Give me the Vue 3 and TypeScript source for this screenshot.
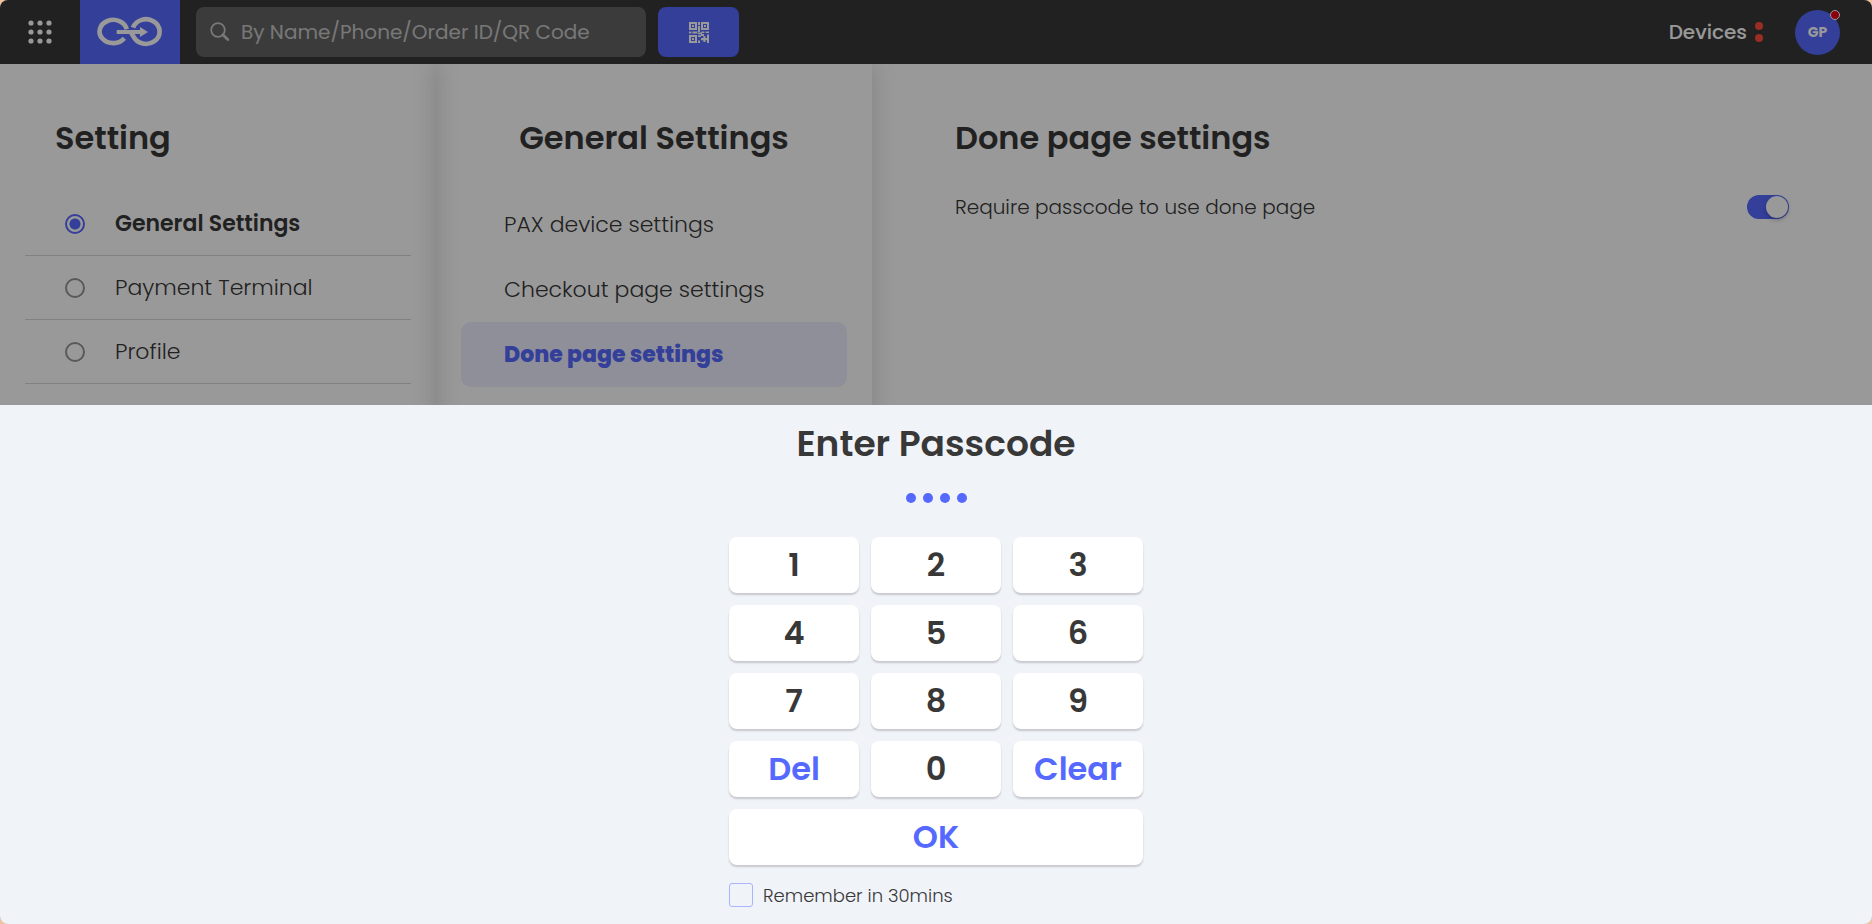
<script setup lang="ts">
import { ref } from 'vue'

const sections: string[] = ['General Settings', 'Payment Terminal', 'Profile']
const activeSection = ref<string>('General Settings')

const pages: string[] = ['PAX device settings', 'Checkout page settings', 'Done page settings']
const activePage = ref<string>('Done page settings')

const requirePasscode = ref<boolean>(true)
const remember = ref<boolean>(false)
const search = ref<string>('')

const maxLength = 4
const passcode = ref<string>('0000')
const keys: string[] = ['1', '2', '3', '4', '5', '6', '7', '8', '9', 'Del', '0', 'Clear', 'OK']

function isAction(key: string): boolean {
  return key.length > 1
}

function press(key: string): void {
  if (key === 'Del') passcode.value = passcode.value.slice(0, -1)
  else if (key === 'Clear') passcode.value = ''
  else if (!isAction(key) && passcode.value.length < maxLength) passcode.value += key
}
</script>

<template>
  <div class="shell">
    <header class="topbar">
      <button class="menu" type="button" aria-label="Menu">
        <svg width="24" height="24" viewBox="0 0 24 24" fill="#fff">
          <g v-for="y in [3, 12, 21]" :key="y">
            <circle v-for="x in [3, 12, 21]" :key="x" :cx="x" :cy="y" r="2.6" />
          </g>
        </svg>
      </button>
      <a class="logo" href="#" aria-label="Home">
        <svg width="100" height="64" viewBox="0 0 300 192" fill="none" stroke="#fff" stroke-width="14">
          <path d="M140 88 A41 35 0 1 0 133 115" />
          <path d="M159 83 A41 37 0 1 1 160 109 L152 96" />
          <path d="M110 96 H182" stroke-width="12" />
          <path d="M180 81 L204 96 L180 111 Z" fill="#fff" stroke="none" />
        </svg>
      </a>
      <label class="search">
        <svg width="20" height="20" viewBox="0 0 20 20" fill="none" stroke="#c8c8c8">
          <circle cx="8" cy="8" r="6.8" stroke-width="1.8" />
          <path d="M12.8 12.8 L17.8 17.6" stroke-width="2.8" stroke-linecap="round" />
        </svg>
        <input v-model="search" type="text" aria-label="Search" placeholder="By Name/Phone/Order ID/QR Code" />
      </label>
      <button class="qr" type="button" aria-label="Scan QR code">
        <svg width="20" height="21" viewBox="0 0 20 21" fill="#fff">
          <g fill="none" stroke="#fff" stroke-width="2">
            <rect x="1" y="1" width="6" height="6" />
            <rect x="13" y="1" width="6" height="6" />
            <rect x="1" y="14" width="6" height="6" />
          </g>
          <path d="M3 3h2v2H3zM15 3h2v2h-2zM3 16h2v2H3zM9 0h2v3H9zM9 4h2v6H9zM0 9.6h2.4v1.8H0zM3.4 9.6h5v1.8h-5zM9 10.4h4v1.8H9zM12.4 9.4h3v1.6h-3zM16.6 9.4H20V11h-3.4zM9 13.2h3V15H9zM12 12h3v2h-3zM14.4 14h2v6h-2zM12 16h8v2.2h-8zM18 12.4h2V21h-2zM9 18.6h2V21H9z" />
        </svg>
      </button>
      <div class="account">
        <button class="devices" type="button">
          Devices
          <span class="lights"><i></i><i></i></span>
        </button>
        <button class="avatar" type="button">GP<span class="badge"></span></button>
      </div>
    </header>

    <main class="columns">
      <nav class="panel" aria-label="Setting">
        <h1>Setting</h1>
        <ul class="sections">
          <li v-for="name in sections" :key="name">
            <label :class="{ active: name === activeSection }">
              <input v-model="activeSection" type="radio" name="section" :value="name" />
              {{ name }}
            </label>
          </li>
        </ul>
      </nav>

      <nav class="panel" aria-label="General Settings">
        <h1 class="centered">General Settings</h1>
        <button
          v-for="name in pages"
          :key="name"
          type="button"
          class="page"
          :class="{ active: name === activePage }"
          @click="activePage = name"
        >
          {{ name }}
        </button>
      </nav>

      <section class="detail">
        <h1>Done page settings</h1>
        <label class="option">
          Require passcode to use done page
          <input v-model="requirePasscode" class="switch" type="checkbox" role="switch" />
        </label>
      </section>
    </main>

    <div class="overlay">
      <section class="sheet" role="dialog" aria-labelledby="sheet-title">
        <h2 id="sheet-title">Enter Passcode</h2>
        <div class="dots">
          <span v-for="n in passcode.length" :key="n"></span>
        </div>
        <div class="keypad">
          <button
            v-for="key in keys"
            :key="key"
            type="button"
            :class="{ action: isAction(key), wide: key === 'OK' }"
            @click="press(key)"
          >
            {{ key }}
          </button>
          <label class="remember">
            <input v-model="remember" type="checkbox" />
            Remember in 30mins
          </label>
        </div>
      </section>
    </div>
  </div>
</template>

<style>
body {
  margin: 0;
  background: #f3c49b;
}
</style>

<style scoped>
* {
  box-sizing: border-box;
}

.shell {
  position: relative;
  display: flex;
  flex-direction: column;
  min-height: 100vh;
  overflow: hidden;
  border-radius: 8px;
  background: #fff;
  color: #383838;
  font-family: Poppins, Inter, "Open Sans", sans-serif;
}

button,
input {
  margin: 0;
  font-family: inherit;
  color: inherit;
}

button {
  padding: 0;
  border: 0;
  background: none;
  cursor: pointer;
}

h1,
h2 {
  margin: 0;
  font-weight: 600;
}

h1 {
  font-size: 32px;
  line-height: 48px;
}

.topbar {
  position: relative;
  z-index: 1;
  display: flex;
  align-items: center;
  height: 64px;
  background: #383838;
  color: #fff;
}

.menu {
  display: flex;
  align-items: center;
  justify-content: center;
  width: 80px;
  height: 64px;
}

.logo {
  display: flex;
  background: #5569ff;
}

.search {
  display: flex;
  align-items: center;
  gap: 11px;
  width: 450px;
  height: 50px;
  margin: 0 12px 0 16px;
  padding: 0 14px;
  border-radius: 8px;
  background: #636363;
}

.search input {
  flex: 1;
  min-width: 0;
  padding: 0;
  border: 0;
  outline: 0;
  background: none;
  font-size: 20px;
}

.search input::placeholder {
  color: #c8c8c8;
  opacity: 1;
}

.qr {
  display: flex;
  align-items: center;
  justify-content: center;
  width: 81px;
  height: 50px;
  border-radius: 8px;
  background: #5569ff;
}

.account {
  display: flex;
  align-items: center;
  gap: 32px;
  margin-left: auto;
  padding-right: 32px;
}

.devices {
  display: flex;
  align-items: center;
  gap: 8px;
  font-size: 20px;
  font-weight: 500;
}

.lights {
  display: grid;
  gap: 4px;
}

.lights i {
  width: 8px;
  height: 8px;
  border-radius: 50%;
  background: #ff4b39;
}

.avatar {
  position: relative;
  width: 45px;
  height: 45px;
  border-radius: 50%;
  background: #5569ff;
  font-size: 14px;
  font-weight: 700;
}

.badge {
  position: absolute;
  top: 0;
  right: 0;
  width: 10px;
  height: 10px;
  border: 1px solid #fff;
  border-radius: 50%;
  background: #e6001a;
}

.columns {
  display: flex;
  flex: 1;
}

.panel {
  flex: 0 0 436px;
  padding: 50px 25px 0;
  box-shadow: 0 0 24px rgba(0, 0, 0, 0.16);
}

.panel h1 {
  padding: 0 30px;
}

.panel .centered {
  padding: 0;
  text-align: center;
}

.sections {
  margin: 30px 0 0;
  padding: 0;
  list-style: none;
}

.sections label {
  display: flex;
  align-items: center;
  gap: 30px;
  height: 64px;
  padding-left: 40px;
  border-bottom: 1px solid #d8d8d8;
  font-size: 22px;
  font-weight: 300;
}

.sections .active {
  font-weight: 600;
}

.sections input {
  appearance: none;
  width: 20px;
  height: 20px;
  border: 2px solid #949494;
  border-radius: 50%;
}

.sections input:checked {
  border-color: #5569ff;
  background: radial-gradient(circle, #5569ff 5px, transparent 6px);
}

.page {
  display: block;
  width: 100%;
  height: 65px;
  padding-left: 43px;
  border-radius: 10px;
  font-size: 22px;
  font-weight: 300;
  text-align: left;
}

.centered + .page {
  margin-top: 30px;
}

.page.active {
  background: #eeeeff;
  color: #5569ff;
  font-weight: 800;
}

.detail {
  flex: 1;
  padding: 50px 83px 0;
}

.option {
  display: flex;
  align-items: center;
  justify-content: space-between;
  height: 30px;
  margin-top: 30px;
  font-size: 20px;
  font-weight: 300;
}

.switch {
  appearance: none;
  display: flex;
  justify-content: flex-start;
  width: 42px;
  height: 24px;
  padding: 1px;
  border-radius: 12px;
  background: #c8c8c8;
}

.switch::before {
  content: "";
  width: 22px;
  height: 22px;
  border-radius: 50%;
  background: #fff;
  box-shadow: 0 2px 4px rgba(0, 0, 0, 0.25);
}

.switch:checked {
  justify-content: flex-end;
  background: #5569ff;
}

.overlay {
  position: absolute;
  z-index: 2;
  inset: 0;
  display: flex;
  flex-direction: column;
  justify-content: flex-end;
  background: rgba(0, 0, 0, 0.4);
}

.sheet {
  display: flex;
  flex-direction: column;
  align-items: center;
  padding: 12px 16px 17px;
  background: #f0f3f8;
}

.sheet h2 {
  font-size: 36px;
  line-height: 54px;
}

.dots {
  display: flex;
  gap: 7px;
  height: 10px;
  margin: 22px 0 34px;
}

.dots span {
  width: 10px;
  height: 10px;
  border-radius: 50%;
  background: #5569ff;
}

.keypad {
  display: grid;
  grid-template-columns: repeat(3, 130px);
  gap: 12px;
}

.keypad button {
  height: 56px;
  border-radius: 8px;
  background: #fff;
  box-shadow: 0 2px 2px rgba(0, 0, 0, 0.18);
  font-size: 32px;
  font-weight: 600;
}

.keypad .action {
  color: #5569ff;
}

.keypad .wide {
  grid-column: 1 / -1;
}

.remember {
  grid-column: 1 / -1;
  display: flex;
  align-items: center;
  gap: 10px;
  height: 24px;
  margin-top: 6px;
  font-size: 18px;
  font-weight: 300;
}

.remember input {
  appearance: none;
  width: 24px;
  height: 24px;
  border: 1px solid #aab4ff;
  border-radius: 3px;
}

.remember input:checked {
  background: #5569ff;
}
</style>
